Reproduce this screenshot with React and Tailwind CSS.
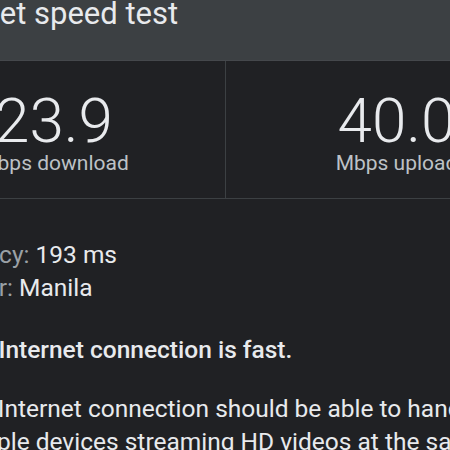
export default function App() {
  return (
    <div className="w-[450px] h-[450px] overflow-hidden bg-[#202124] text-[#e8eaed] font-['Roboto',sans-serif]">
      <div className="h-[63px] bg-[#3c4043] border-b border-[#45484c]">
        <h1 className="-ml-[80px] -mt-[2px] text-[31px] leading-none whitespace-nowrap text-[#e8eaed]">
          Internet speed test
        </h1>
      </div>

      <div className="flex -ml-[117px] w-[684px] h-[138px] border-b border-[#3c4043]">
        <div className="w-[342px] flex flex-col items-center pt-[29px]">
          <div className="text-[62px] leading-none font-light text-[#e8eaed]">23.9</div>
          <div className="mt-[1px] text-[21px] leading-none text-[#bdc1c6]">Mbps download</div>
        </div>
        <div className="w-[342px] flex flex-col items-center pt-[29px] border-l border-[#3c4043]">
          <div className="text-[62px] leading-none font-light text-[#e8eaed]">40.0</div>
          <div className="mt-[1px] text-[21px] leading-none text-[#bdc1c6]">Mbps upload</div>
        </div>
      </div>

      <div className="-ml-[58px] text-[24.5px] leading-[33px] whitespace-nowrap">
        <div className="mt-[39px] -ml-[4px]">
          <div>
            <span className="text-[#9aa0a6]">Latency:</span> 193 ms
          </div>
          <div>
            <span className="text-[#9aa0a6]">Server:</span> Manila
          </div>
        </div>
        <p className="mt-[29px] font-medium">Your Internet connection is fast.</p>
        <p className="mt-[26px]">
          Your Internet connection should be able to handle
          <br />
          multiple devices streaming HD videos at the same time.
        </p>
      </div>
    </div>
  );
}
